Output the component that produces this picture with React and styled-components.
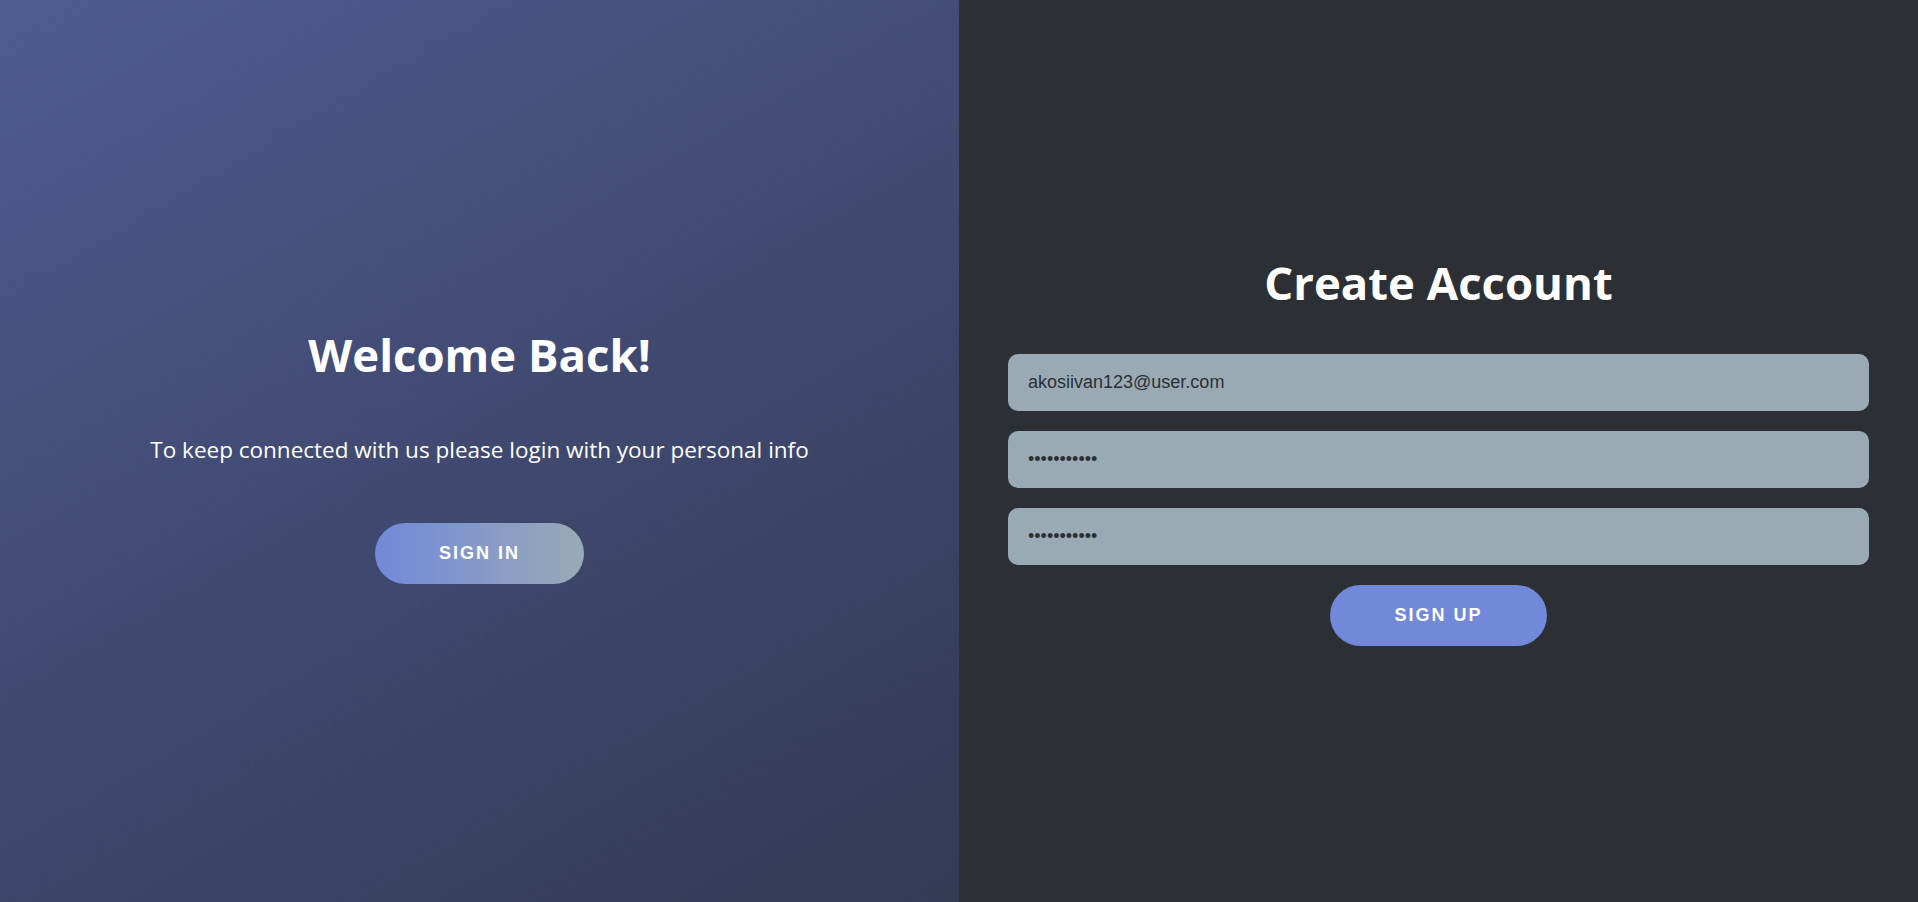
import React from 'react'
import styled, { createGlobalStyle } from 'styled-components'

const GlobalStyle = createGlobalStyle`
  html, body, #root {
    margin: 0;
    padding: 0;
    height: 100%;
  }
  body {
    font-family: "Open Sans", "Noto Sans", sans-serif;
    background: #2c2f33;
  }
  * {
    box-sizing: border-box;
  }
`

const Page = styled.div`
  display: flex;
  width: 100vw;
  height: 100vh;
  overflow: hidden;
`

const Panel = styled.section`
  flex: 1;
  display: flex;
  flex-direction: column;
  align-items: center;
  justify-content: center;
  padding: ${(p) => p.$top || '0'} 49px ${(p) => p.$bottom || '0'};
  background: ${(p) =>
    p.$overlay
      ? 'linear-gradient(150deg, #4f5c92 0%, #414b73 45%, #333a54 100%)'
      : '#2c2f33'};
`

const Title = styled.h1`
  margin: 0;
  font-size: 45.5px;
  line-height: 58px;
  font-weight: 700;
  color: #fff;
  text-align: center;
`

const Text = styled.p`
  margin: 52px 0 0;
  font-size: 22.5px;
  line-height: 30px;
  color: #fff;
  text-align: center;
`

const Button = styled.button`
  margin-top: ${(p) => p.$gap || '20px'};
  padding: 20px 64px;
  border: none;
  border-radius: 40px;
  font-family: "Liberation Sans", Arial, sans-serif;
  font-size: 18px;
  line-height: 21px;
  font-weight: 700;
  letter-spacing: 2px;
  text-transform: uppercase;
  color: #fff;
  cursor: pointer;
  background: ${(p) =>
    p.$ghost ? 'linear-gradient(90deg, #7289da, #99aab5)' : '#7289da'};
`

const Form = styled.form`
  width: 100%;
  display: flex;
  flex-direction: column;
  align-items: center;
  gap: 20px;
  margin-top: 43px;
`

const Input = styled.input`
  width: 100%;
  height: 57px;
  padding: 0 20px;
  border: none;
  border-radius: 10px;
  outline: none;
  background: #99aab5;
  color: #2c2f33;
  font-family: "Liberation Sans", Arial, sans-serif;
  font-size: 18px;
`

function App() {
  return (
    <>
      <GlobalStyle />
      <Page>
        <Panel $overlay $top="6px">
          <Title>Welcome Back!</Title>
          <Text>To keep connected with us please login with your personal info</Text>
          <Button $ghost $gap="58px" type="button">Sign In</Button>
        </Panel>
        <Panel $bottom="4px">
          <Title>Create Account</Title>
          <Form onSubmit={(e) => e.preventDefault()}>
            <Input type="email" defaultValue="akosiivan123@user.com" />
            <Input type="password" defaultValue="password123" />
            <Input type="password" defaultValue="password123" />
            <Button $gap="0" type="submit">Sign Up</Button>
          </Form>
        </Panel>
      </Page>
    </>
  )
}

export default App
